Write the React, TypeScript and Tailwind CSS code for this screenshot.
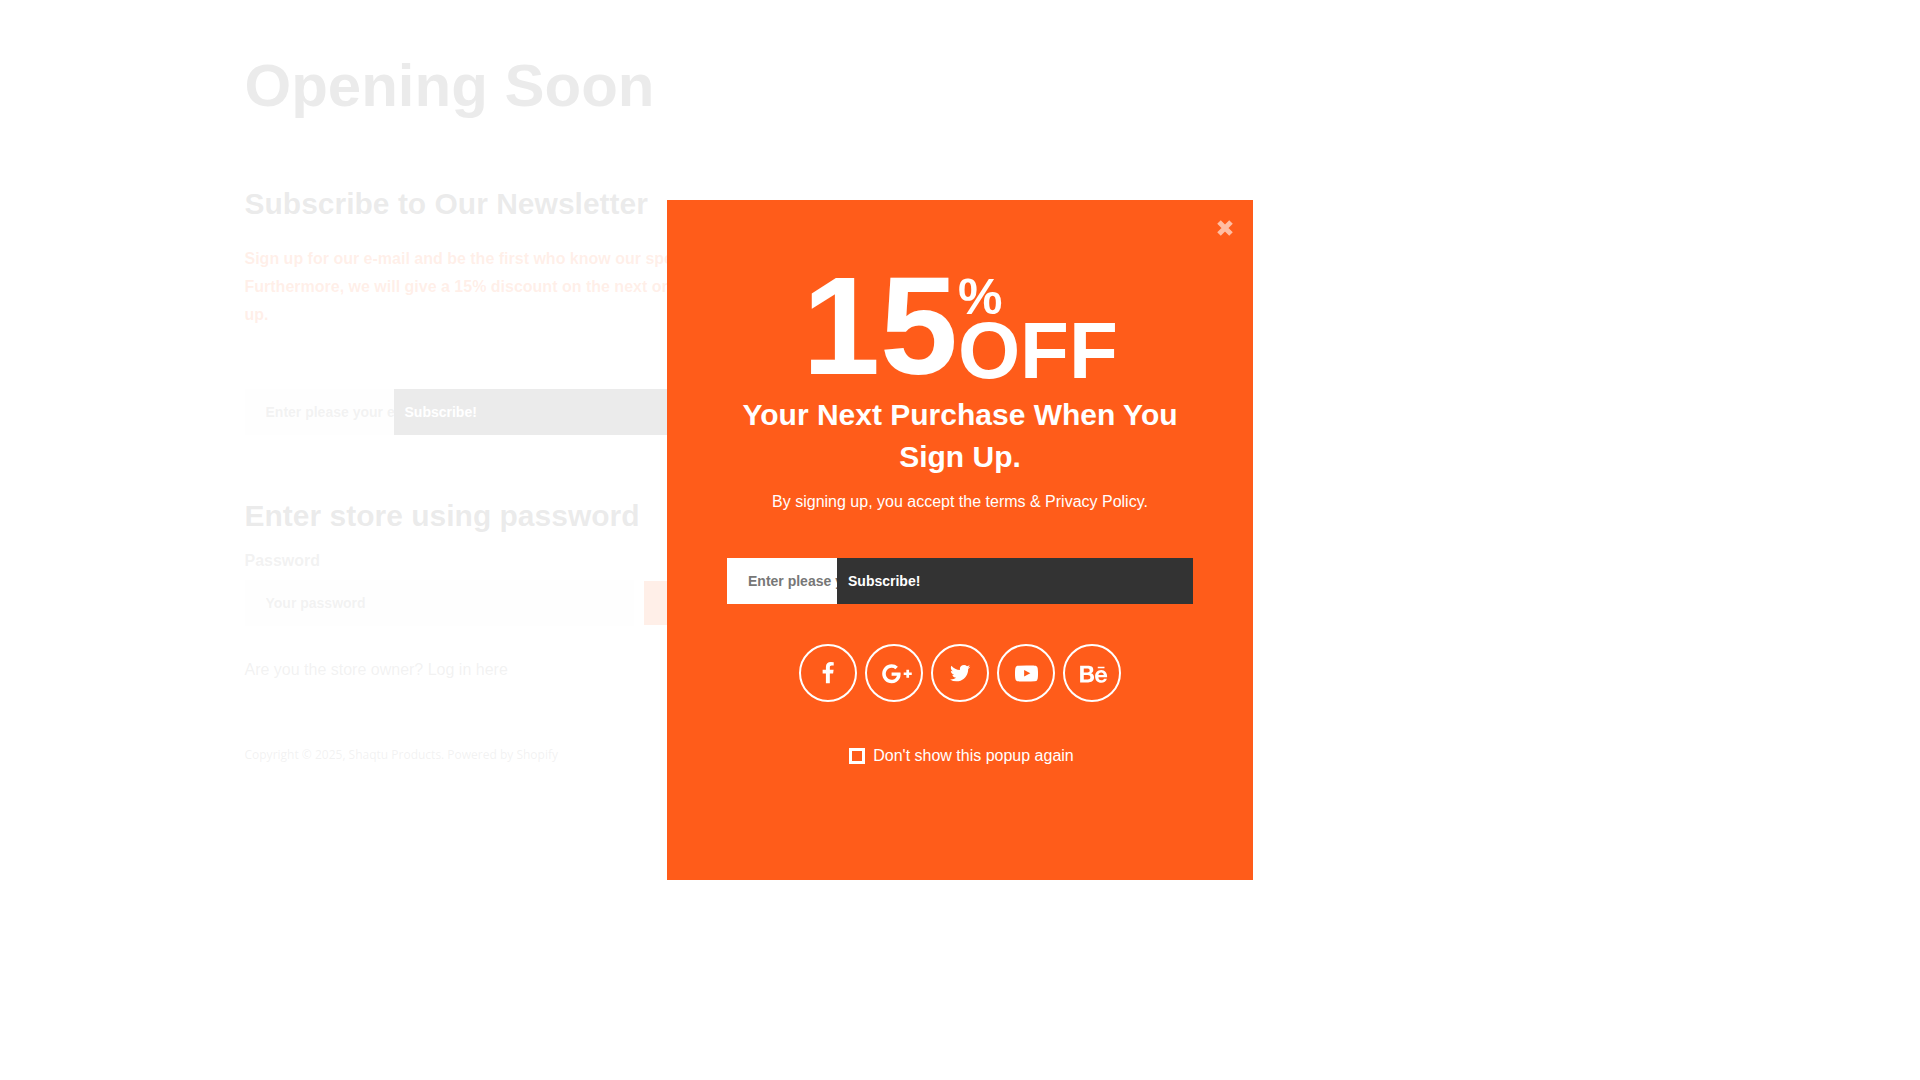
import React from "react";
import { FaBehance } from "react-icons/fa";

function Glyph({ d, viewBox = "30 30 1792 1792" }: { d: string; viewBox?: string }) {
  return (
    <svg className="h-[23px] w-auto" viewBox={viewBox} fill="currentColor" aria-hidden="true">
      <path d={d} />
    </svg>
  );
}

const socials = [
  {
    label: "Facebook",
    icon: (
      <Glyph
        viewBox="40 0 1792 1792"
        d="M1343 12v264h-157q-86 0-116 36t-30 108v189h293l-39 296h-254v759h-306v-759h-255v-296h255v-218q0-186 104-288.5t277-102.5q147 0 228 12z"
      />
    ),
  },
  {
    label: "Google Plus",
    icon: (
      <Glyph
        viewBox="-560 -20 2904 1792"
        d="M1437 913q0 208-87 370.5t-248 254-369 91.5q-149 0-285-58t-234-156-156-234-58-285 58-285 156-234 234-156 285-58q286 0 491 192l-199 191q-117-113-292-113-123 0-227.5 62t-165.5 168.5-61 232.5 61 232.5 165.5 168.5 227.5 62q83 0 152.5-23t114.5-57.5 78.5-78.5 49-83 21.5-74h-416v-252h692q12 63 12 122zm867-122v210h-209v209h-210v-209h-209v-210h209v-209h210v209h209z"
      />
    ),
  },
  {
    label: "Twitter",
    icon: (
      <Glyph d="M1684 408q-67 98-162 167 1 14 1 42 0 130-38 259.5t-115.5 248.5-184.5 210.5-258 146-323 54.5q-271 0-496-145 35 4 78 4 225 0 401-138-105-2-188-64.5t-114-159.5q33 5 61 5 43 0 85-11-112-23-185.5-111.5t-73.5-205.5v-4q68 38 146 41-66-44-105-115t-39-154q0-88 44-163 121 149 294.5 238.5t371.5 99.5q-8-38-8-74 0-134 94.5-228.5t228.5-94.5q140 0 236 102 109-21 205-78-37 115-142 178 93-10 186-50z" />
    ),
  },
  {
    label: "YouTube",
    icon: (
      <Glyph d="M711 1128l484-250-484-253v503zm185-862q168 0 324.5 4.5t229.5 9.5l73 4q1 0 17 1.5t23 3 23.5 4.5 28.5 8 28 13 31 19.5 29 26.5q6 6 15.5 18.5t29 58.5 26.5 101q8 64 12.5 136.5t5.5 113.5v176q1 145-18 290-7 55-25 99.5t-32 61.5l-14 17q-14 15-29 26.5t-31 19-28 12.5-28.5 8-24 4.5-23 3-16.5 1.5q-251 19-627 19-207-2-359.5-6.5t-200.5-7.5l-49-4-36-4q-36-5-54.5-10t-51-21-56.5-41q-6-6-15.5-18.5t-29-58.5-26.5-101q-8-64-12.5-136.5t-5.5-113.5v-176q-1-145 18-290 7-55 25-99.5t32-61.5l14-17q14-15 29-26.5t31-19.5 28-13 28.500-8 23.500-4.500 23-3 17-1.500q251-18 627-18z" viewBox="0 0 1792 1792" />
    ),
  },
  { label: "Behance", icon: <FaBehance size={27} viewBox="-24 -16 576 512" className="overflow-visible" /> },
];

function SubscribeForm({ id, inputClass }: { id: string; inputClass: string }) {
  return (
    <form className="flex h-[46px] text-sm font-bold" onSubmit={(e) => e.preventDefault()}>
      <input
        id={id}
        type="email"
        aria-label="E-mail"
        placeholder="Enter please your e-mail"
        className={`${inputClass} min-w-0 shrink-0 pl-[21px] text-[#333] outline-none placeholder:text-[#777]`}
      />
      <button type="submit" className="min-w-0 flex-1 bg-[#333] pl-[11px] text-left text-white">
        Subscribe!
      </button>
    </form>
  );
}

function StorePage() {
  return (
    <main className="mx-auto max-w-[1431px] pt-12 text-base leading-7 text-[#777]">
      <h1 className="text-6xl leading-[76px] font-bold text-[#333]">Opening Soon</h1>
      <div className="w-full max-w-[550px]">
        <h2 className="mt-[60px] text-3xl leading-10 font-bold text-[#333]">Subscribe to Our Newsletter</h2>
        <p className="mt-[21px] font-bold text-[#ff5c1a]">
          Sign up for our e-mail and be the first who know our special offers! Furthermore, we will give a 15% discount on the next order if you sign up.
        </p>
        <div className="mt-[60px]">
          <SubscribeForm id="page-email" inputClass="w-[149px] bg-[#f5f5f5]" />
        </div>
        <h2 className="mt-[61px] text-3xl leading-10 font-bold text-[#333]">Enter store using password</h2>
        <form className="mt-[11px]" onSubmit={(e) => e.preventDefault()}>
          <label htmlFor="password" className="block font-bold">Password</label>
          <div className="mt-[5px] flex items-center gap-[10px]">
            <input
              id="password"
              type="password"
              placeholder="Your password"
              className="h-[46px] w-[389px] bg-[#f5f5f5] pl-[21px] text-sm font-bold outline-none placeholder:text-[#777]"
            />
            <button type="submit" className="h-11 flex-1 bg-[#ff5c1a] text-sm font-bold text-white" aria-label="Enter" />
          </div>
        </form>
        <p className="mt-[30px]">
          Are you the store owner? <a href="#login">Log in here</a>
        </p>
        <p className="mt-[57px] font-['Open_Sans',sans-serif] text-xs leading-7">
          Copyright © 2025, Shaqtu Products. Powered by <a href="#shopify">Shopify</a>
        </p>
      </div>
    </main>
  );
}

function Popup() {
  return (
    <section
      role="dialog"
      aria-label="Newsletter offer"
      className="relative w-full max-w-[586px] bg-[#ff5c1a] px-[60px] pt-[66px] pb-[110px] text-center text-white"
    >
      <button type="button" aria-label="Close" className="absolute top-[18px] right-[18px] text-[#ffbea3]">
        <svg width="20" height="20" viewBox="0 0 20 20" fill="none" stroke="currentColor" strokeWidth="5">
          <path d="M4 4 16 16M16 4 4 16" />
        </svg>
      </button>
      <div className="flex justify-center font-bold">
        <span className="text-[140px] leading-[120px]">15</span>
        <span className="flex flex-col pt-[7px] text-left">
          <span className="text-[50px] leading-[48px]">%</span>
          <span className="text-[80px] leading-[60px]">OFF</span>
        </span>
      </div>
      <h2 className="mt-2 text-3xl leading-[42px] font-bold">Your Next Purchase When You Sign Up.</h2>
      <p className="mt-[10px] text-base leading-7">By signing up, you accept the terms &amp; Privacy Policy.</p>
      <div className="mt-[42px]">
        <SubscribeForm id="popup-email" inputClass="w-[110px] bg-white" />
      </div>
      <ul className="mt-10 flex justify-center gap-2">
        {socials.map((s) => (
          <li key={s.label}>
            <a
              href="#social"
              aria-label={s.label}
              className="flex size-[58px] items-center justify-center rounded-full border-2 border-white"
            >
              {s.icon}
            </a>
          </li>
        ))}
      </ul>
      <div className="mt-10 flex items-center justify-center gap-2 pl-[3px] text-base leading-7">
        <input
          id="hide-popup"
          type="checkbox"
          className="size-4 appearance-none border-3 border-white checked:bg-[#333]"
        />
        <label htmlFor="hide-popup">Don't show this popup again</label>
      </div>
    </section>
  );
}

export default function App() {
  return (
    <div className="min-h-screen bg-white font-['Liberation_Sans',Arial,sans-serif]">
      <StorePage />
      <div className="fixed inset-0 flex items-center justify-center bg-white/90">
        <Popup />
      </div>
    </div>
  );
}
